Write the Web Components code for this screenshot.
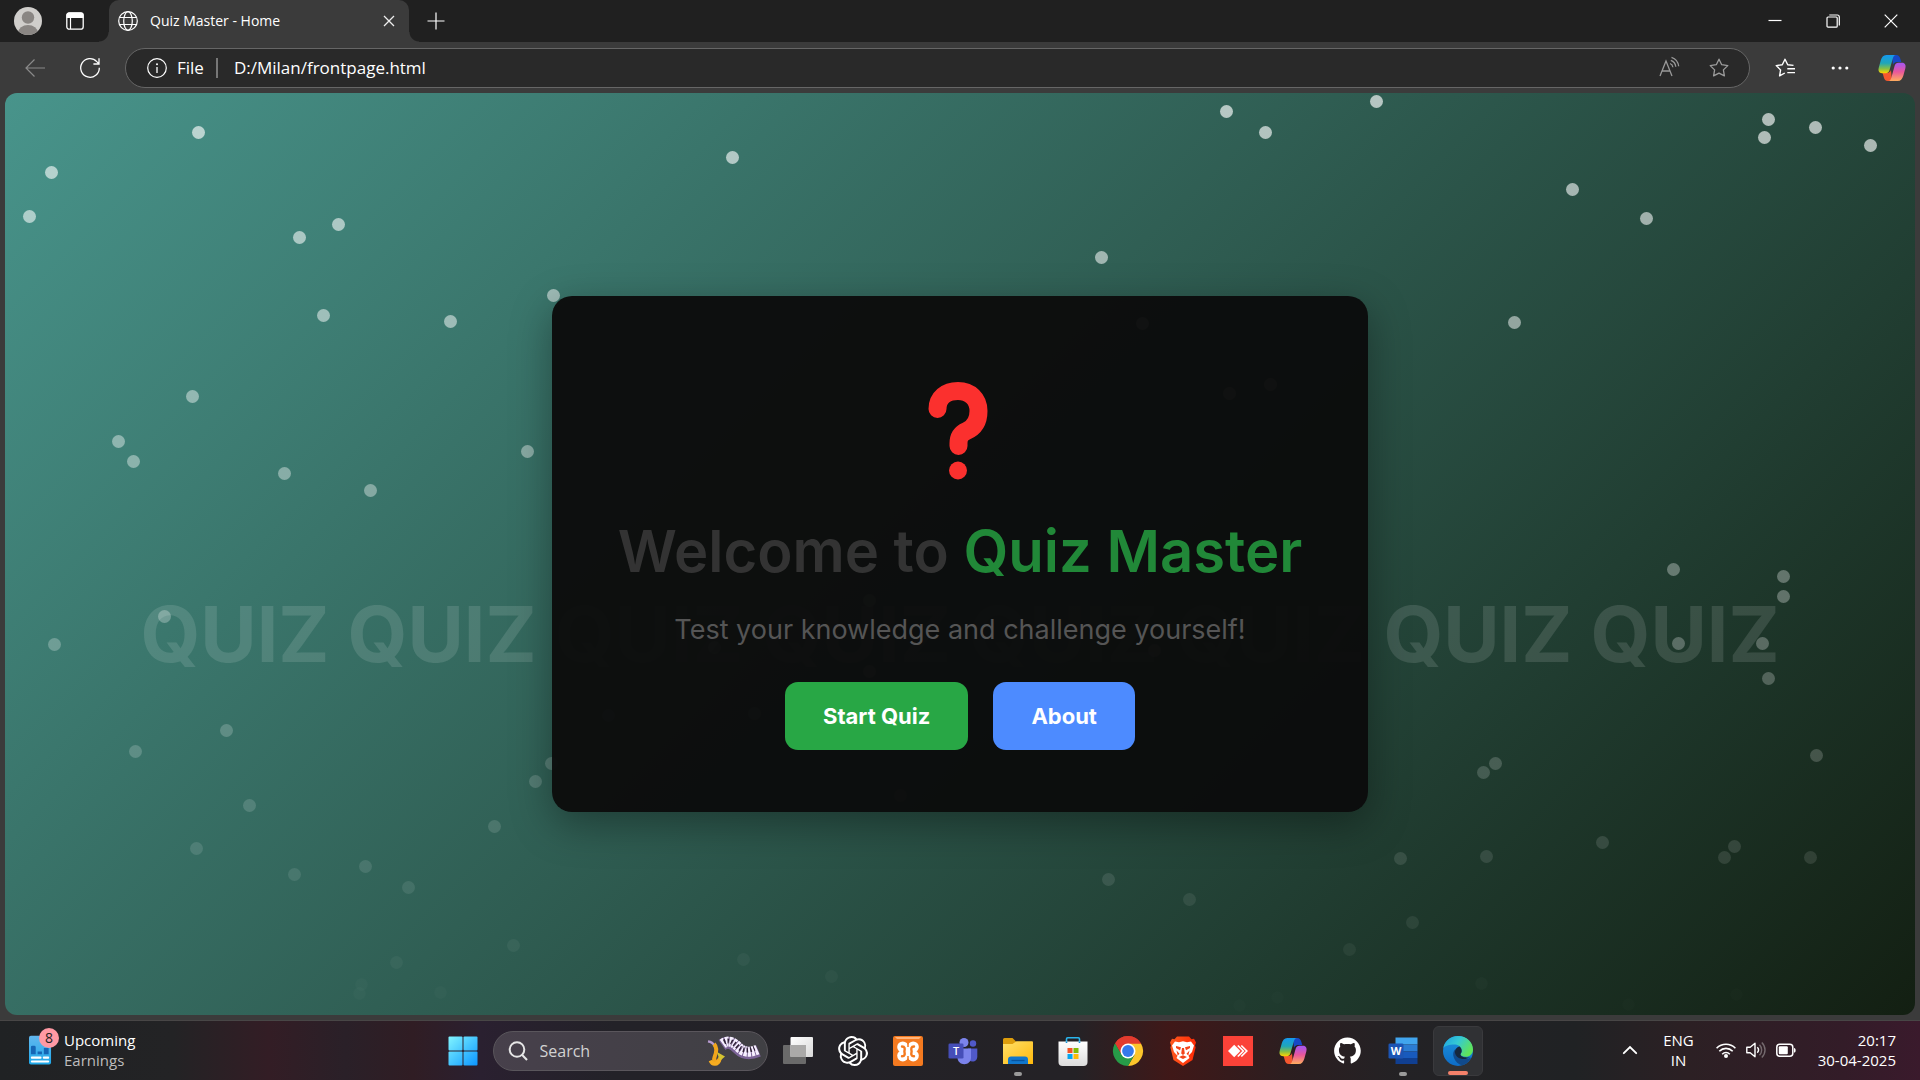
<!DOCTYPE html>
<html lang="en">
<head>
<meta charset="utf-8">
<title>Quiz Master - Home</title>
<style>
  html, body { margin: 0; height: 100%; }
  body { font-family: "Open Sans", "Noto Sans", sans-serif; background: #202020; color: #fff; }
</style>
</head>
<body>
<desktop-shell>
  <browser-tabs slot="tabs" label="Quiz Master - Home"></browser-tabs>
  <browser-toolbar slot="toolbar" scheme="File" address="D:/Milan/frontpage.html"></browser-toolbar>
  <quiz-page slot="page">
    <quiz-card>
      <span slot="lead">Welcome to</span>
      <span slot="brand">Quiz Master</span>
      <span slot="text">Test your knowledge and challenge yourself!</span>
      <quiz-button slot="actions" tone="start">Start Quiz</quiz-button>
      <quiz-button slot="actions" tone="about">About</quiz-button>
    </quiz-card>
  </quiz-page>
  <task-bar slot="taskbar"></task-bar>
</desktop-shell>

<script>
const ICONS = {
  avatar: ['0 0 28 28', `<clipPath id="a"><circle cx="14" cy="14" r="14"/></clipPath><g clip-path="url(#a)"><rect width="28" height="28" fill="#d0cecb"/><circle cx="14" cy="10.500" r="6.200" fill="#8a8683"/><ellipse cx="14" cy="25.500" rx="9.800" ry="7.500" fill="#8a8683"/></g>`],
  workspaces: ['0 0 18 18', `<rect x=".8" y="1" width="16.400" height="16.200" rx="2.500" fill="none" stroke="#fff" stroke-width="1.300"/><path d="M.5 6V3a2.500 2.500 0 0 1 2.500-2.600h12A2.500 2.500 0 0 1 17.500 3v3z" fill="#fff"/><path d="M4.500 6v11" stroke="#fff" stroke-width="1.200"/>`],
  globe: ['0 0 20 20', `<g fill="none" stroke="#fff" stroke-width="1.200"><circle cx="10" cy="10" r="9.300"/><ellipse cx="10" cy="10" rx="4.300" ry="9.300"/><path d="M1.500 6.500h17M1.500 13.500h17"/></g>`],
  cross: ['0 0 12 12', `<path d="M1 1l10 10M11 1L1 11" stroke="#eee" stroke-width="1.300"/>`],
  plus: ['0 0 18 18', `<path d="M9 .5v17M.5 9h17" stroke="#fff" stroke-width="1.200"/>`],
  minimize: ['0 0 14 14', `<path d="M.5 6.500h13" stroke="#fff" stroke-width="1.200"/>`],
  restore: ['0 0 14 14', `<g fill="none" stroke="#fff" stroke-width="1.200"><rect x="1" y="3" width="10.200" height="10.200" rx="1"/><path d="M3.300 1h8a2 2 0 0 1 2 2v8.500"/></g>`],
  close: ['0 0 14 14', `<path d="M.7.7l12.600 12.600M13.300.7L.7 13.300" stroke="#fff" stroke-width="1.200"/>`],
  back: ['0 0 20 20', `<path d="M20 10H1M9.500 1.500L1 10l8.500 8.500" fill="none" stroke="#8a8a8a" stroke-width="1.200"/>`],
  refresh: ['0 0 20 20', `<path d="M19.300 9.700A9.300 9.300 0 1 1 16.800 3.600L19 5.800M19 .3v5.700h-5.600" fill="none" stroke="#fff" stroke-width="1.300"/>`],
  info: ['0 0 20 20', `<circle cx="10" cy="10" r="9.300" fill="none" stroke="#fff" stroke-width="1.200"/><path d="M10 9v6" stroke="#fff" stroke-width="1.300"/><circle cx="10" cy="6.300" r="1" fill="#fff"/>`],
  read: ['0 0 20 20', `<g fill="none" stroke="#999" stroke-width="1.300"><path d="M1 18L7 3l6 15M3.200 13h7.700M11 5.500c1.800.6 2.700 1.900 2.900 3.700M11.800 2.300c2.900 1 4.700 3.200 5 6.500M12.500-.7c3.900 1.300 6.700 4.600 7.200 9"/></g>`],
  star: ['0 0 20 20', `<path d="M10 1.200l2.700 5.500 6.100.9-4.400 4.300 1 6-5.400-2.800-5.400 2.800 1-6L1.200 7.600l6.100-.9z" fill="none" stroke="#9c9c9c" stroke-width="1.300" stroke-linejoin="round"/>`],
  favorites: ['0 0 20 20', `<path d="M18.500 7.400l-5.800-.7L10 1.200 7.300 6.700l-6.100.9 4.400 4.300-1 6L9.800 15" fill="none" stroke="#fff" stroke-width="1.400" stroke-linejoin="round"/><path d="M12.300 10.800H20M12.300 14.600H20" stroke="#fff" stroke-width="1.400"/>`],
  more: ['0 0 18 18', `<g fill="#fff"><circle cx="2.200" cy="9" r="1.600"/><circle cx="9" cy="9" r="1.600"/><circle cx="15.800" cy="9" r="1.600"/></g>`],
  copilot: ['0 0 28 28', `<defs><linearGradient id="l" x1="0" y1="0" x2="0" y2="1"><stop offset="0" stop-color="#1598ee"/><stop offset=".45" stop-color="#20a6b8"/><stop offset=".75" stop-color="#86bf45"/><stop offset="1" stop-color="#ffd400"/></linearGradient><linearGradient id="r" x1="0" y1="0" x2="0" y2="1"><stop offset="0" stop-color="#a456f4"/><stop offset=".5" stop-color="#e9579b"/><stop offset="1" stop-color="#ffad5e"/></linearGradient></defs><path d="M14 1h4.200c2.500 0 3.600 1.700 4.200 4l.9 3H19c-2 0-3.500 1.400-4 3z" fill="#1748c6"/><path d="M14 27H9.900c-2.500 0-3.500-1.500-4.100-3.700L4.600 19H9c2 0 3.600-1.400 4-3z" fill="#f4572f"/><path d="M18 1H8.300C5.300 1 3.700 3.300 2.800 6.300L.8 13.500c-.9 3.200.2 5.700 3.300 5.700h3.500c2.300 0 3.500-1.400 4-3.400l3.300-11.500C15.400 2.400 16.200 1 18 1z" fill="url(#l)"/><path d="M10.500 27h9.300c3 0 4.600-2.300 5.500-5.300l2-7.200c.9-3.200-.2-5.700-3.300-5.700h-3.500c-2.300 0-3.500 1.400-4 3.400l-3.200 11.500c-.5 1.900-1.200 3.300-2.800 3.300z" fill="url(#r)"/>`],
  start: ['0 0 30 30', `<linearGradient id="w" x1="0" y1="0" x2="30" y2="30" gradientUnits="userSpaceOnUse"><stop offset="0" stop-color="#84f6ff"/><stop offset=".5" stop-color="#45c5ff"/><stop offset="1" stop-color="#0a94ff"/></linearGradient><g fill="url(#w)"><rect x=".5" y=".5" width="14" height="14" rx="1"/><rect x="15.500" y=".5" width="14" height="14" rx="1"/><rect x=".5" y="15.500" width="14" height="14" rx="1"/><rect x="15.500" y="15.500" width="14" height="14" rx="1"/></g>`],
  search: ['0 0 20 20', `<g fill="none" stroke="#e6e6e6" stroke-width="2"><circle cx="9" cy="8.500" r="7.300"/><path d="M14 13.700l5 5.300"/></g>`],
  music: ['0 -2 54 28', `<g fill="none"><path d="M1 2.300c3 .5 5.300 2 6.300 4" stroke="#b79bd0" stroke-width="2.200"/><path d="M7 5c4 4 2.200 9 .6 13-2 5.500 3.200 7 5.700.8" stroke="#f1a51c" stroke-width="4"/><path d="M10 13l8 4.500-5.200 4.500z" fill="#d5c431"/><path d="M3.500 21.500c2 5 7.200 4.400 9-.7" stroke="#f6ac20" stroke-width="3.800"/><path d="M15 6c7-5 12-.5 16 3.500 5 5 12 6 20.500 2.500" stroke="#7b6397" stroke-width="12"/><path d="M15.600 4.800c7-5 12-.5 16 3.500 5 5 11 5.800 18.800 2.300" stroke="#f6efff" stroke-width="10" stroke-dasharray="2.800 .8"/><path d="M17 3c5-2.500 9 .2 13.500 4.500 5 4.500 11 4.300 17 1.700" stroke="#302238" stroke-width="5" stroke-dasharray="1.500 2.100"/></g>`],
  taskview: ['0 0 30 30', `<defs><linearGradient id="g" x1="0" y1="0" x2="1" y2="1"><stop offset="0" stop-color="#fff"/><stop offset="1" stop-color="#d9d9d9"/></linearGradient></defs><rect x="0" y="9" width="23" height="19" rx="1" fill="#6a6a6a"/><rect x="7.500" y="1" width="22.500" height="20" rx="1" fill="url(#g)"/><path d="M7.500 9H23v12H7.500z" fill="#aaa9a8"/>`],
  chatgpt: ['0 0 24 24', `<path fill="#fff" d="M22.2819 9.8211a5.9847 5.9847 0 0 0-.5157-4.9108 6.0462 6.0462 0 0 0-6.5098-2.9A6.0651 6.0651 0 0 0 4.9807 4.1818a5.9847 5.9847 0 0 0-3.9977 2.9 6.0462 6.0462 0 0 0 .7427 7.0966 5.98 5.98 0 0 0 .511 4.9107 6.051 6.051 0 0 0 6.5146 2.9001A5.9847 5.9847 0 0 0 13.2599 24a6.0557 6.0557 0 0 0 5.7718-4.2058 5.9894 5.9894 0 0 0 3.9977-2.9001 6.0557 6.0557 0 0 0-.7475-7.0729zm-9.022 12.6081a4.4755 4.4755 0 0 1-2.8764-1.0408l.1419-.0804 4.7783-2.7582a.7948.7948 0 0 0 .3927-.6813v-6.7369l2.02 1.1686a.071.071 0 0 1 .038.052v5.5826a4.504 4.504 0 0 1-4.4945 4.4944zm-9.6607-4.1254a4.4708 4.4708 0 0 1-.5346-3.0137l.142.0852 4.783 2.7582a.7712.7712 0 0 0 .7806 0l5.8428-3.3685v2.3324a.0804.0804 0 0 1-.0332.0615L9.74 19.9502a4.4992 4.4992 0 0 1-6.1408-1.6464zM2.3408 7.8956a4.485 4.485 0 0 1 2.3655-1.9728V11.6a.7664.7664 0 0 0 .3879.6765l5.8144 3.3543-2.0201 1.1685a.0757.0757 0 0 1-.071 0l-4.8303-2.7865A4.504 4.504 0 0 1 2.3408 7.872zm16.5963 3.8558L13.1038 8.364 15.1192 7.2a.0757.0757 0 0 1 .071 0l4.8303 2.7913a4.4944 4.4944 0 0 1-.6765 8.1042v-5.6772a.79.79 0 0 0-.407-.667zm2.0107-3.0231l-.142-.0852-4.7735-2.7818a.7759.7759 0 0 0-.7854 0L9.409 9.2297V6.8974a.0662.0662 0 0 1 .0284-.0615l4.8303-2.7866a4.4992 4.4992 0 0 1 6.6802 4.66zM8.3065 12.863l-2.02-1.1638a.0804.0804 0 0 1-.038-.0567V6.0742a4.4992 4.4992 0 0 1 7.3757-3.4537l-.142.0805L8.704 5.459a.7948.7948 0 0 0-.3927.6813zm1.0976-2.3654l2.602-1.4998 2.6069 1.4998v2.9994l-2.5974 1.4997-2.6067-1.4997Z"/>`],
  xampp: ['0 0 30 30', `<rect width="30" height="30" rx="2" fill="#f47a20"/><path d="M2 1h26l-2 2H4z" fill="#ffb57c"/><g fill="#fff"><circle cx="9.800" cy="11" r="5.600"/><circle cx="20.200" cy="11" r="5.600"/><circle cx="9.800" cy="19.800" r="5.600"/><circle cx="20.200" cy="19.800" r="5.600"/><path d="M10 11h10v9H10z"/></g><g fill="none" stroke="#f47a20" stroke-width="2.400" stroke-linecap="round"><path d="M9 10.500c3 0 3 2 2.400 4.900C12 18.300 12 20.300 9 20.300M21 10.500c-3 0-3 2-2.400 4.900-.6 2.900-.6 4.900 2.400 4.900"/></g><path d="M15 7v4M15 20v4" stroke="#f47a20" stroke-width="1.500"/>`],
  teams: ['0 0 30 30', `<circle cx="25" cy="7.500" r="3.200" fill="#5059c9"/><path d="M20 12.500h9.300v8c0 3-2 5-4.700 5S20 23.500 20 20.500z" fill="#5059c9"/><circle cx="16" cy="6.500" r="4.500" fill="#7b83eb"/><path d="M9.500 12.500H23v9c0 4-3 6.700-6.700 6.700s-6.800-2.700-6.800-6.700z" fill="#7b83eb"/><rect x=".5" y="7.500" width="15" height="15" rx="1.300" fill="#464eb8"/><text x="8" y="19" font-family="Open Sans" font-size="11" font-weight="600" fill="#fff" text-anchor="middle">T</text>`],
  explorer: ['0 0 30 30', `<defs><linearGradient id="f" x1="0" y1="0" x2="1" y2="1"><stop offset="0" stop-color="#ffe069"/><stop offset="1" stop-color="#ffb90c"/></linearGradient></defs><path d="M0 3.500A1.500 1.500 0 0 1 1.500 2h8l4 4H28a2 2 0 0 1 2 2v4H0z" fill="#dd9d0c"/><path d="M0 8h9.500l4-2.800H29a1 1 0 0 1 1 1V28H0z" fill="url(#f)"/><path d="M5 28v-4.500a3 3 0 0 1 3-3h14a3 3 0 0 1 3 3V28z" fill="#1177cc"/><path d="M8.500 24.500h13" stroke="#07549e" stroke-width="1.300"/>`],
  store: ['0 0 30 30', `<defs><linearGradient id="s" x1="0" y1="0" x2="0" y2="1"><stop offset="0" stop-color="#fff"/><stop offset="1" stop-color="#dcdcdc"/></linearGradient></defs><path d="M8.500 8V3a1.200 1.200 0 0 1 1.200-1.200h10.600A1.200 1.200 0 0 1 21.500 3v5" fill="none" stroke="#2ab5ec" stroke-width="1.600"/><path d="M.5 5.500h29V26a4 4 0 0 1-4 4h-21a4 4 0 0 1-4-4z" fill="url(#s)"/><path d="M8.500 5.500V7M21.500 5.500V7" stroke="#1791cf" stroke-width="1.600"/><path d="M9.500 12h5v5h-5z" fill="#f35325"/><path d="M15.500 12h5v5h-5z" fill="#81bc06"/><path d="M9.500 18h5v5h-5z" fill="#05a6f0"/><path d="M15.500 18h5v5h-5z" fill="#ffba08"/>`],
  chrome: ['0 0 30 30', `<path d="M15 15L2 7.500A15 15 0 0 1 28 7.500z" fill="#e33b2e"/><path d="M15 7.500h13A15 15 0 0 1 15 30l6.500-11.300z" fill="#fcc52b"/><path d="M8.500 18.750L2 7.500A15 15 0 0 0 15 30l6.500-11.250z" fill="#279b48"/><path d="M2 7.500A15 15 0 0 1 28 7.500H15z" fill="#e33b2e"/><path d="M2 7.500l6.500 11.300L15 7.500z" fill="#e33b2e"/><path d="M2 7.500l6.500 11.300 4 3-9 1A15 15 0 0 1 2 7.500z" fill="#279b48"/><circle cx="15" cy="15" r="7.500" fill="#fff"/><circle cx="15" cy="15" r="5.900" fill="#3579ec"/>`],
  brave: ['0 0 30 30', `<defs><linearGradient id="b" x1="0" x2="1"><stop offset="0" stop-color="#ff5a1f"/><stop offset="1" stop-color="#ff2a05"/></linearGradient></defs><path d="M9 .5h12l2.500 2.700 2.500-.4 2 3.700-1 3 .6 2L24.500 24 15 30l-9.500-6L2.400 11.500l.6-2-1-3 2-3.700 2.500.4z" fill="url(#b)"/><path d="M7 5.500l4 .8 4-1 4 1 4-.8 3 4-2 6.500-3.500 3.700 1 2.300L15 27l-6.500-5 1-2.300L6 16 4 9.500z" fill="#fff"/><path d="M8 10l5 1.200-1 3-4-2.200zM22 10l-5 1.200 1 3 4-2.200zM14 12h2l.8 5.500L15 19l-1.800-1.500zM8.500 14.500l3 3.300-1.800 1.600zM21.500 14.500l-3 3.300 1.800 1.600zM11 21l4-1.700 4 1.700-4 2z" fill="#f3441b"/>`],
  anydesk: ['0 0 30 30', `<path d="M0 0h30v30H0z" fill="#fb4238"/><path d="M5 15l6.200-6.200 6.200 6.200-6.200 6.200z" fill="#fff"/><path d="M14.800 9.500l5.500 5.500-5.500 5.500M18.300 9.500l5.500 5.500-5.500 5.500" fill="none" stroke="#fff" stroke-width="1.700"/>`],
  github: ['-1 -1 27 27', `<path fill="#fff" d="M12 .297c-6.630 0-12 5.373-12 12 0 5.303 3.438 9.800 8.205 11.385.6.113.82-.258.82-.577 0-.285-.01-1.040-.015-2.040-3.338.724-4.042-1.610-4.042-1.610C4.422 18.070 3.633 17.700 3.633 17.700c-1.087-.744.084-.729.084-.729 1.205.084 1.838 1.236 1.838 1.236 1.070 1.835 2.809 1.305 3.495.998.108-.776.417-1.305.76-1.605-2.665-.3-5.466-1.332-5.466-5.930 0-1.310.465-2.380 1.235-3.220-.135-.303-.54-1.523.105-3.176 0 0 1.005-.322 3.300 1.230.96-.267 1.980-.399 3-.405 1.020.006 2.040.138 3 .405 2.280-1.552 3.285-1.230 3.285-1.230.645 1.653.24 2.873.12 3.176.765.84 1.230 1.910 1.230 3.220 0 4.610-2.805 5.625-5.475 5.920.42.36.81 1.096.81 2.220 0 1.606-.015 2.896-.015 3.286 0 .315.21.69.825.57C20.565 22.092 24 17.592 24 12.297c0-6.627-5.373-12-12-12"/>`],
  word: ['0 0 30 30', `<path d="M7.500 1.500H29.500v7H7.500z" fill="#41a5ee"/><path d="M7.500 8.500h22v7h-22z" fill="#2b7cd3"/><path d="M7.500 15.500h22v6.500h-22z" fill="#185abd"/><path d="M7.500 22h22v6h-22z" fill="#103f91"/><rect x=".5" y="7.500" width="15" height="15" rx="1.300" fill="#1c55b4"/><text x="8" y="19" font-family="Open Sans" font-size="11" font-weight="700" fill="#fff" text-anchor="middle">W</text>`],
  edge: ['0 0 30 30', `<defs><linearGradient id="e1" x1="0" y1="0" x2="1" y2=".5"><stop offset="0" stop-color="#1d9fe0"/><stop offset=".5" stop-color="#35c9d4"/><stop offset="1" stop-color="#5fe45a"/></linearGradient><linearGradient id="e2" x1="0" y1="0" x2="0" y2="1"><stop offset="0" stop-color="#1d94dc"/><stop offset="1" stop-color="#0d6cc7"/></linearGradient></defs><circle cx="15" cy="15" r="15" fill="url(#e2)"/><path d="M.3 12C1.500 5 7.500 0 15 0c8.500 0 15 6 15 13.500 0 4.500-3.200 7.300-7.200 7.300-3.500 0-5.300-1.300-5.300-2.500 0-.8 1.200-1.300 1.200-3.600 0-3.500-3.200-6.200-7.200-6.200C6 8.500 2 10 .3 12z" fill="url(#e1)"/><path d="M12.500 13c-2.500 2-3 5.500-1.500 9 1.300 3.500 4.500 6.500 8 7.400 3.500-1 6.800-3.600 8.700-7 .3-.5-.3-.8-.7-.5-1.500.8-3.300 1.200-5 1.200-5.500 0-10-3.500-9.500-10.100z" fill="#114a8b"/><path d="M17.500 18.300c0-.8 1.200-1.300 1.200-3.600 0-1.700-.8-3.200-2-4.300-3.200.6-5 3.500-4.700 6.500.5 3 3 5.200 6 5.800 3.500.7 7-.2 9.500-1.800-4 1.200-10 .3-10-2.600z" fill="#16283e"/>`],
  news: ['0 0 24 30', `<defs><linearGradient id="n" x1="0" y1="0" x2="0" y2="1"><stop offset="0" stop-color="#62b7ee"/><stop offset="1" stop-color="#1fa9ea"/></linearGradient></defs><rect width="23" height="30" rx="2" fill="url(#n)"/><path d="M2 12a1.500 1.500 0 0 1 1.500-1.500h2A1.500 1.500 0 0 1 7 12v7.500H2zM9 16.500h4.500v3H9zM15.500 13h5v6.500h-5z" fill="#1566b5"/><path d="M3 23h9M15.500 23h4.500M3 27h17" stroke="#fff" stroke-width="2.200" stroke-linecap="round"/>`],
  chevron: ['0 0 14 14', `<path d="M.8 10.200L7 4l6.200 6.200" fill="none" stroke="#fff" stroke-width="1.900" stroke-linecap="round"/>`],
  wifi: ['0 0 20 20', `<g fill="none" stroke="#fff" stroke-width="1.600"><path d="M.6 8.200c5.300-5.300 13.500-5.300 18.800 0M3.300 11.200c3.800-3.800 9.600-3.800 13.400 0M6.200 14.200c2.200-2.200 5.400-2.200 7.600 0"/></g><circle cx="10" cy="16" r="2" fill="#fff"/>`],
  speaker: ['0 0 20 20', `<path d="M.8 7.300h3.400L9 3.300v13.400l-4.800-4H.8z" fill="none" stroke="#fff" stroke-width="1.400" stroke-linejoin="round"/><path d="M11.300 7.300c1.500 1.600 1.500 3.800 0 5.400" fill="none" stroke="#fff" stroke-width="1.400"/><path d="M13.500 4.800c2.900 3 2.900 7.400 0 10.400M15.800 2.500c4.300 4.300 4.300 10.700 0 15" fill="none" stroke="#746a6e" stroke-width="1.400"/>`],
  battery: ['0 0 20 20', `<rect x=".8" y="4.300" width="16" height="12" rx="3" fill="none" stroke="#fff" stroke-width="1.500"/><rect x="2.800" y="6.300" width="9" height="8" rx="1" fill="#fff"/><path d="M18 8c2.200 0 2.200 4.600 0 4.600z" fill="#fff"/>`],
  question: ['0 0 60 98', `<path d="M9.500 27C9.500 16 18 9 30 9s20.500 8 20.500 20c0 10-4 16.500-12 20-6 2.600-8 6.500-8 12.500V64" fill="none" stroke="#fb302e" stroke-width="18" stroke-linecap="round"/><circle cx="30" cy="88.500" r="9" fill="#fb302e"/>`]
};

class BaseElement extends HTMLElement {
  constructor() {
    super();
    this.attachShadow({ mode: 'open' });
  }
  connectedCallback() {
    this.shadowRoot.innerHTML = `<style>*{box-sizing:border-box}button{font:inherit;color:inherit;background:none;border:0;padding:0;margin:0;display:flex;align-items:center;justify-content:center}input{font:inherit;color:inherit;background:none;border:0;padding:0;outline:0;min-width:0}${this.css()}</style>${this.html()}`;
  }
  css() { return ''; }
  html() { return '<slot></slot>'; }
}

class UiIcon extends BaseElement {
  css() { return ':host{display:block;flex:none}svg{display:block;overflow:visible}'; }
  html() {
    const [box, body] = ICONS[this.getAttribute('name')];
    const size = this.getAttribute('size') || '20';
    const width = this.getAttribute('width') || size;
    return `<svg aria-hidden="true" width="${width}" height="${size}" viewBox="${box}">${body}</svg>`;
  }
}
customElements.define('ui-icon', UiIcon);

class DesktopShell extends BaseElement {
  css() { return `
    :host{display:flex;flex-direction:column;min-height:100vh;background:#3b3b3b}
    main{flex:1;display:flex;padding:0 5px 6px}
    ::slotted(quiz-page){flex:1}`; }
  html() { return `<slot name="tabs"></slot><slot name="toolbar"></slot><main><slot name="page"></slot></main><slot name="taskbar"></slot>`; }
}
customElements.define('desktop-shell', DesktopShell);

class BrowserTabs extends BaseElement {
  css() { return `
    :host{display:flex;align-items:stretch;height:42px;background:#202020;padding-left:14px;font-size:14px}
    .profile{margin-right:24px}
    .spaces{margin-right:25px}
    .tab{position:relative;display:flex;align-items:center;gap:12px;width:300px;padding:0 14px 0 9px;background:#3b3b3b;border-radius:10px 10px 0 0}
    .tab::before,.tab::after{content:"";position:absolute;bottom:0;width:10px;height:10px}
    .tab::before{left:-10px;background:radial-gradient(circle at 0 0,transparent 9px,#3b3b3b 10px)}
    .tab::after{right:-10px;background:radial-gradient(circle at 100% 0,transparent 9px,#3b3b3b 10px)}
    .title{flex:1;white-space:nowrap;line-height:34px}
    .plus{width:54px}
    .controls{display:flex;margin-left:auto}
    .controls button{width:58px}`; }
  html() { return `
    <button class="profile" aria-label="Profile"><ui-icon name="avatar" size="28"></ui-icon></button>
    <button class="spaces" aria-label="Tab actions"><ui-icon name="workspaces" size="18"></ui-icon></button>
    <div class="tab"><ui-icon name="globe"></ui-icon><span class="title">${this.getAttribute('label')}</span><button aria-label="Close tab"><ui-icon name="cross" size="12"></ui-icon></button></div>
    <button class="plus" aria-label="New tab"><ui-icon name="plus" size="18"></ui-icon></button>
    <div class="controls">
      <button aria-label="Minimize"><ui-icon name="minimize" size="14"></ui-icon></button>
      <button aria-label="Restore"><ui-icon name="restore" size="14"></ui-icon></button>
      <button aria-label="Close"><ui-icon name="close" size="14"></ui-icon></button>
    </div>`; }
}
customElements.define('browser-tabs', BrowserTabs);

class BrowserToolbar extends BaseElement {
  css() { return `
    :host{display:flex;align-items:center;gap:15px;height:51px;padding:0 11px 0 15px;font-size:17px}
    button{width:40px;height:40px;flex:none}
    .copilot{width:34px}
    .address{flex:1;display:flex;align-items:center;height:40px;padding:0 20px 0 21px;background:#292929;border:1px solid #666;border-radius:20px}
    label{margin-left:10px}
    .bar{width:2px;height:20px;margin:0 16px 0 12px;background:#777}
    input{flex:1}
    .address button{width:20px}
    .address button + button{margin-left:30px}`; }
  html() { return `
    <button aria-label="Back"><ui-icon name="back"></ui-icon></button>
    <button aria-label="Refresh"><ui-icon name="refresh"></ui-icon></button>
    <div class="address"><ui-icon name="info"></ui-icon><label for="url">${this.getAttribute('scheme')}</label><span class="bar"></span>
      <input id="url" type="text" value="${this.getAttribute('address')}">
      <button aria-label="Read aloud"><ui-icon name="read"></ui-icon></button>
      <button aria-label="Add to favorites"><ui-icon name="star"></ui-icon></button></div>
    <button aria-label="Favorites"><ui-icon name="favorites"></ui-icon></button>
    <button aria-label="Settings and more"><ui-icon name="more" size="18"></ui-icon></button>
    <button class="copilot" aria-label="Copilot"><ui-icon name="copilot" size="28"></ui-icon></button>`; }
}
customElements.define('browser-toolbar', BrowserToolbar);

/* Rising dots: each one fades out in proportion to its distance from the top. */
const FIELD = { width: 1910, height: 922 };
const DOTS = [
  [194,40],[47,80],[25,124],[728,65],[334,132],[295,145],[319,223],[446,229],[549,203],[188,304],[114,349],[129,369],[280,381],[366,398],[523,359],
  [1222,19],[1261,40],[1372,9],[1764,27],[1760,45],[1811,35],[1866,53],[1568,97],[1642,126],[1097,165],[1510,230],[1138,231],[1266,292],[1225,301],
  [1669,477],[1779,484],[1779,504],[160,524],[50,552],[222,638],[131,659],[547,671],[531,689],[245,713],[490,734],[192,756],[290,782],[361,774],[404,795],
  [509,853],[392,870],[357,892],[355,901],[436,900],[739,867],[827,884],[604,623],[750,621],[896,703],[865,508],[865,579],[710,555],[1150,558],
  [1674,551],[1758,551],[1764,586],[1491,671],[1479,680],[1812,663],[1396,766],[1482,764],[1598,750],[1730,754],[1720,765],[1806,765],[1104,787],
  [1185,807],[1408,830],[1345,857],[1477,891],[1273,905],[1235,913],[1624,912],[1732,902]
];
class ParticleField extends BaseElement {
  css() { return `
    :host{position:absolute;inset:0;overflow:hidden}
    i{position:absolute;width:13px;height:13px;margin:-7px 0 0 -7px;border-radius:50%;background:#fff}`; }
  html() {
    return DOTS.map(([x, y]) => `<i style="left:${(x / FIELD.width * 100).toFixed(2)}%;top:${(y / FIELD.height * 100).toFixed(2)}%;opacity:${(0.66 * (1 - y / FIELD.height)).toFixed(2)}"></i>`).join('');
  }
}
customElements.define('particle-field', ParticleField);

class QuizPage extends BaseElement {
  css() { return `
    :host{position:relative;display:flex;align-items:center;justify-content:center;overflow:hidden;border-radius:12px;background:linear-gradient(135deg,#48948b,#131f12);font-family:Inter,"Open Sans",sans-serif}
    .words{position:absolute;top:50%;left:0;right:0;text-align:center;font-size:77px;font-weight:700;line-height:160px;white-space:nowrap;color:rgba(255,255,255,.12)}
    ::slotted(quiz-card){position:relative}`; }
  html() { return `<div class="words" aria-hidden="true">${Array(8).fill('QUIZ').join(' ')}</div><particle-field></particle-field><slot></slot>`; }
}
customElements.define('quiz-page', QuizPage);

class QuizCard extends BaseElement {
  css() { return `
    :host{display:flex;flex-direction:column;align-items:center;padding:62px 66px;border-radius:20px;background:rgba(11,11,11,.96);box-shadow:0 12px 40px rgba(0,0,0,.35);text-align:center}
    ui-icon{margin:24px 4px 39px 0}
    h1{margin:0 0 27px;font-size:58px;line-height:64px;font-weight:600;color:#333;white-space:nowrap}
    .brand{color:#218838}
    p{margin:0 0 32px;font-size:27px;line-height:40px;color:#555}
    .actions{display:flex;gap:25px}`; }
  html() { return `<ui-icon name="question" width="60" size="98"></ui-icon>
    <h1><slot name="lead"></slot> <span class="brand"><slot name="brand"></slot></span></h1>
    <p><slot name="text"></slot></p><div class="actions"><slot name="actions"></slot></div>`; }
}
customElements.define('quiz-card', QuizCard);

class QuizButton extends BaseElement {
  css() { return `
    :host{display:block}
    button{height:68px;padding:0 38px;border-radius:13px;background:#28a745;color:#fff;font-size:22px;font-weight:700}
    :host([tone=about]) button{background:#4d8bff}`; }
  html() { return '<button><slot></slot></button>'; }
}
customElements.define('quiz-button', QuizButton);

class TaskItem extends BaseElement {
  css() { return `
    :host{display:block}
    button{position:relative;width:50px;height:50px;border-radius:6px}
    :host([state=active]) button{background:#303134;border:1px solid #3a3a3d}
    :host([state]) button::after{content:"";position:absolute;bottom:0;width:8px;height:4px;border-radius:2px;background:#9a9a9a}
    :host([state=active]) button::after{width:20px;background:#f4816a}`; }
  html() {
    const name = this.getAttribute('name');
    return `<button aria-label="${this.getAttribute('label') || name}"><ui-icon name="${name}" size="${this.getAttribute('size') || 30}"></ui-icon></button>`;
  }
}
customElements.define('task-item', TaskItem);

class TaskBar extends BaseElement {
  css() { return `
    :host{display:grid;grid-template-columns:1fr auto 1fr;align-items:center;height:59px;font-size:15px;line-height:20px;
      background:linear-gradient(90deg,#202224 0,#232325 9%,#331d25 14%,#2a2028 18%,#301d24 21.500%,#2a2030 25%,#232228 32%,#242226 56%,#401818 61%,#2c1e20 67%,#232225 73%,#202224 82%,#2c2024 88%,#331c28 96%,#3a1a2c);box-shadow:0 -1px #484646}
    .news{position:relative;justify-self:start;margin-left:29px;padding-bottom:2px;gap:12px;text-align:left}
    .badge{position:absolute;left:10px;top:-2px;width:20px;height:20px;border-radius:50%;background:#ff99a4;color:#222;font-size:14px;text-align:center}
    .news small{display:block;font-size:15px;color:#bdbdbd}
    .apps{display:flex;align-items:center;gap:5px}
    .search{display:flex;align-items:center;width:275px;height:40px;padding:0 6px 0 14px;border:1px solid #5a565c;border-radius:20px;background:linear-gradient(90deg,#47404b,#404044)}
    .search label{display:flex}
    .search input{flex:1;margin-left:12px;font-size:16px}
    .search input::placeholder{color:#d2d2d2;opacity:1}
    .tray{display:flex;align-items:center;justify-self:end;gap:22px;margin-right:24px;padding-bottom:2px}
    .chevron{margin-right:4px}
    .icons{gap:10px}
    .clock{text-align:right}`; }
  html() { return `
    <button class="news"><ui-icon name="news" width="23" size="30"></ui-icon><span class="badge">8</span><span>Upcoming<small>Earnings</small></span></button>
    <div class="apps">
      <task-item name="start"></task-item>
      <div class="search"><label for="find" aria-label="Search"><ui-icon name="search"></ui-icon></label><input id="find" type="text" placeholder="Search"><ui-icon name="music" width="54" size="28"></ui-icon></div>
      <task-item name="taskview" label="Task view"></task-item>
      <task-item name="chatgpt"></task-item>
      <task-item name="xampp"></task-item>
      <task-item name="teams"></task-item>
      <task-item name="explorer" state="open"></task-item>
      <task-item name="store"></task-item>
      <task-item name="chrome"></task-item>
      <task-item name="brave"></task-item>
      <task-item name="anydesk"></task-item>
      <task-item name="copilot" size="28"></task-item>
      <task-item name="github"></task-item>
      <task-item name="word" state="open"></task-item>
      <task-item name="edge" state="active"></task-item>
    </div>
    <div class="tray">
      <button class="chevron" aria-label="Show hidden icons"><ui-icon name="chevron" size="14"></ui-icon></button>
      <button><span>ENG<br>IN</span></button>
      <button class="icons" aria-label="Network, volume and battery"><ui-icon name="wifi"></ui-icon><ui-icon name="speaker"></ui-icon><ui-icon name="battery"></ui-icon></button>
      <button class="clock"><time datetime="2025-04-30T20:17">20:17<br>30-04-2025</time></button>
    </div>`; }
}
customElements.define('task-bar', TaskBar);
</script>
</body>
</html>
